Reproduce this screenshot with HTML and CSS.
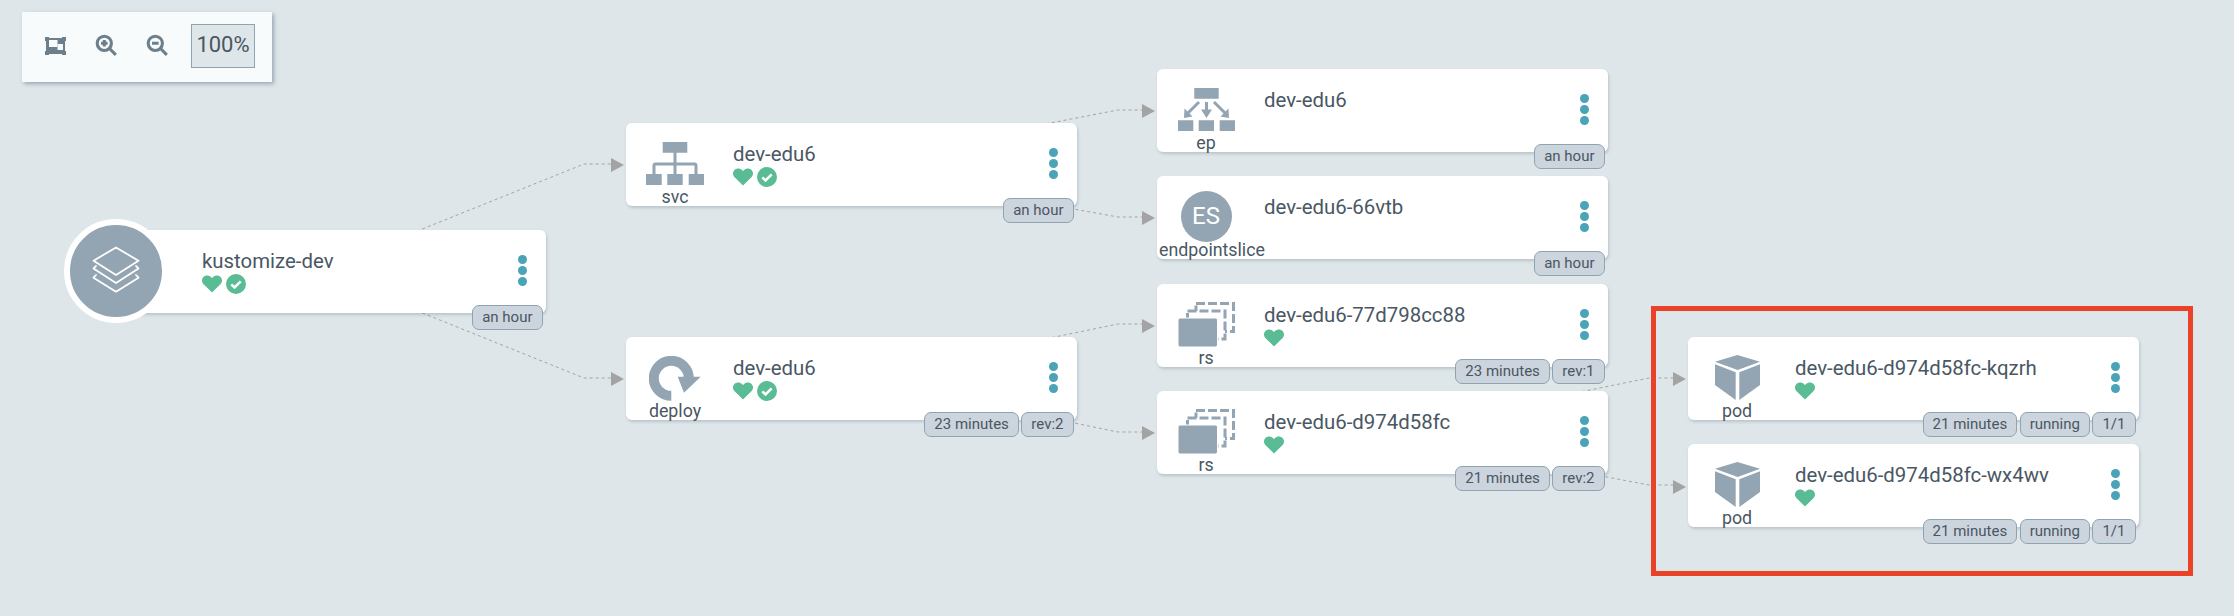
FILE: index.html
```html
<!DOCTYPE html>
<html lang="en">
<head>
    <meta charset="UTF-8">
    <meta name="viewport" content="width=device-width, initial-scale=1.0">
    <title>Application Resource Tree</title>
    <link rel="stylesheet" href="styles.css">
</head>
<body>
    <div class="toolbar">
        <button class="tool">
            <svg width="21" height="18" viewBox="0 0 21 18">
                <path class="tool-fill" d="M0 0h4v1h13V0h4v4h-1v10h1v4h-4v-1H4v1H0v-4h1V4H0z"/>
                <rect class="tool-hole" x="4" y="3" width="8.500" height="7"/>
                <rect class="tool-hole" x="12.500" y="7" width="5.500" height="6"/>
            </svg>
        </button>
        <button class="tool">
            <svg width="23" height="23" viewBox="0 0 21 21">
                <circle class="tool-line" cx="8.500" cy="8.500" r="6.500"/>
                <path class="tool-line" d="M13.500 13.500l5.500 5.500M8.500 5.500v6M5.500 8.500h6"/>
            </svg>
        </button>
        <button class="tool">
            <svg width="23" height="23" viewBox="0 0 21 21">
                <circle class="tool-line" cx="8.500" cy="8.500" r="6.500"/>
                <path class="tool-line" d="M13.500 13.500l5.500 5.500M5.500 8.500h6"/>
            </svg>
        </button>
        <div class="zoom-level">100%</div>
    </div>

    <svg class="edges" width="2234" height="616">
        <polyline points="400,238 584,164 611,164"/>
        <polyline points="400,304 584,378 611,378"/>
        <polyline points="1040,125 1118,110 1142,110"/>
        <polyline points="1040,203 1118,217 1142,217"/>
        <polyline points="1040,340 1118,324 1142,324"/>
        <polyline points="1040,416 1118,432 1142,432"/>
        <polyline points="1570,394 1649,378 1673,378"/>
        <polyline points="1570,470 1649,485 1673,485"/>
        <polygon points="611,158 624,165 611,172"/>
        <polygon points="611,372 624,379 611,386"/>
        <polygon points="1142,104 1155,111 1142,118"/>
        <polygon points="1142,211 1155,218 1142,225"/>
        <polygon points="1142,319 1155,326 1142,333"/>
        <polygon points="1142,426 1155,433 1142,440"/>
        <polygon points="1673,372 1686,379 1673,386"/>
        <polygon points="1673,480 1686,487 1673,494"/>
    </svg>

    <!-- root -->
    <div class="node node-root">
        <div class="root-icon">
            <svg width="92" height="92" viewBox="0 0 92 92">
                <path class="layers" d="M23.500 35.700L46 22.500l22.500 13.200L46 50zM26 41l-2.500 2.400L46 58l22.500-14.600L66 41M26 50l-2.500 2.700L46 66.700l22.500-14L66 50"/>
            </svg>
        </div>
        <div class="kind"></div>
        <div class="info">
            <div class="name">kustomize-dev</div>
            <div class="status">
                <svg class="heart" viewBox="0 0 21 18"><use href="#heart"/></svg>
                <svg class="check" viewBox="0 0 20 20"><use href="#check"/></svg>
            </div>
        </div>
        <div class="dots"><i></i><i></i><i></i></div>
        <div class="badges"><span>an hour</span></div>
    </div>

    <!-- svc -->
    <div class="node node-svc">
        <div class="kind">
            <div class="kind-icon">
                <svg width="58" height="43" viewBox="0 0 58 43">
                    <path class="icon-fill" d="M16.700 0h24.600v10.700H16.700zM0 32h15.700v11H0zM21.300 32h15.400v11H21.300zM42.700 32H58v11H42.700z"/>
                    <path class="icon-line" d="M29 10v22M8 32v-8.500q0-1.500 1.500-1.500h39q1.500 0 1.500 1.500V32"/>
                </svg>
            </div>
            <div class="kind-label">svc</div>
        </div>
        <div class="info">
            <div class="name">dev-edu6</div>
            <div class="status">
                <svg class="heart" viewBox="0 0 21 18"><use href="#heart"/></svg>
                <svg class="check" viewBox="0 0 20 20"><use href="#check"/></svg>
            </div>
        </div>
        <div class="dots"><i></i><i></i><i></i></div>
        <div class="badges"><span>an hour</span></div>
    </div>

    <!-- deploy -->
    <div class="node node-deploy">
        <div class="kind">
            <div class="kind-icon">
                <svg class="deploy-icon" width="52" height="45" viewBox="0 0 52 45">
                    <path class="deploy-ring" d="M22.300 39.800A17.500 17.500 0 1 1 39.800 22.300"/>
                    <polygon class="icon-fill" points="28.700,20.700 51.700,20.700 35,36.700"/>
                </svg>
            </div>
            <div class="kind-label">deploy</div>
        </div>
        <div class="info">
            <div class="name">dev-edu6</div>
            <div class="status">
                <svg class="heart" viewBox="0 0 21 18"><use href="#heart"/></svg>
                <svg class="check" viewBox="0 0 20 20"><use href="#check"/></svg>
            </div>
        </div>
        <div class="dots"><i></i><i></i><i></i></div>
        <div class="badges"><span>23 minutes</span><span>rev:2</span></div>
    </div>

    <!-- ep -->
    <div class="node node-ep">
        <div class="kind">
            <div class="kind-icon">
                <svg width="57" height="43" viewBox="0 0 57 43">
                    <path class="icon-fill" d="M16.300 0h24.400v10.700H16.300zM0 32.300h15.300V43H0zM20.700 32.300H36V43H20.700zM41.700 32.300H57V43H41.700z"/>
                    <path class="icon-line" d="M28.500 14v9M21 14L10 25M36 14l11 11"/>
                    <path class="icon-fill" d="M23 21.500h11L28.500 30zM6.500 20.500l8 8-8.500 1.500zM50.500 20.500l-8 8 8.500 1.500z"/>
                </svg>
            </div>
            <div class="kind-label">ep</div>
        </div>
        <div class="info">
            <div class="name">dev-edu6</div>
            <div class="status"></div>
        </div>
        <div class="dots"><i></i><i></i><i></i></div>
        <div class="badges"><span>an hour</span></div>
    </div>

    <!-- endpointslice -->
    <div class="node node-es">
        <div class="kind">
            <div class="kind-icon">
                <div class="es-icon">ES</div>
            </div>
            <div class="kind-label">endpointslice</div>
        </div>
        <div class="info">
            <div class="name">dev-edu6-66vtb</div>
            <div class="status"></div>
        </div>
        <div class="dots"><i></i><i></i><i></i></div>
        <div class="badges"><span>an hour</span></div>
    </div>

    <!-- rs -->
    <div class="node node-rs1">
        <div class="kind">
            <div class="kind-icon">
                <svg width="57" height="45" viewBox="0 0 57 45"><use href="#rs"/></svg>
            </div>
            <div class="kind-label">rs</div>
        </div>
        <div class="info">
            <div class="name">dev-edu6-77d798cc88</div>
            <div class="status">
                <svg class="heart" viewBox="0 0 21 18"><use href="#heart"/></svg>
            </div>
        </div>
        <div class="dots"><i></i><i></i><i></i></div>
        <div class="badges"><span>23 minutes</span><span>rev:1</span></div>
    </div>

    <div class="node node-rs2">
        <div class="kind">
            <div class="kind-icon">
                <svg width="57" height="45" viewBox="0 0 57 45"><use href="#rs"/></svg>
            </div>
            <div class="kind-label">rs</div>
        </div>
        <div class="info">
            <div class="name">dev-edu6-d974d58fc</div>
            <div class="status">
                <svg class="heart" viewBox="0 0 21 18"><use href="#heart"/></svg>
            </div>
        </div>
        <div class="dots"><i></i><i></i><i></i></div>
        <div class="badges"><span>21 minutes</span><span>rev:2</span></div>
    </div>

    <!-- pods -->
    <div class="node node-pod1">
        <div class="kind">
            <div class="kind-icon">
                <svg width="45" height="45" viewBox="0 0 45 45"><use href="#pod"/></svg>
            </div>
            <div class="kind-label">pod</div>
        </div>
        <div class="info">
            <div class="name">dev-edu6-d974d58fc-kqzrh</div>
            <div class="status">
                <svg class="heart" viewBox="0 0 21 18"><use href="#heart"/></svg>
            </div>
        </div>
        <div class="dots"><i></i><i></i><i></i></div>
        <div class="badges"><span>21 minutes</span><span>running</span><span>1/1</span></div>
    </div>

    <div class="node node-pod2">
        <div class="kind">
            <div class="kind-icon">
                <svg width="45" height="45" viewBox="0 0 45 45"><use href="#pod"/></svg>
            </div>
            <div class="kind-label">pod</div>
        </div>
        <div class="info">
            <div class="name">dev-edu6-d974d58fc-wx4wv</div>
            <div class="status">
                <svg class="heart" viewBox="0 0 21 18"><use href="#heart"/></svg>
            </div>
        </div>
        <div class="dots"><i></i><i></i><i></i></div>
        <div class="badges"><span>21 minutes</span><span>running</span><span>1/1</span></div>
    </div>

    <div class="highlight"></div>

    <!-- shared icons -->
    <svg class="defs" width="0" height="0">
        <defs>
            <g id="heart">
                <path fill="#59bc94" d="M10.500 18L1.700 9.300C-.6 7-.5 3.500 1.500 1.600 3.700-.5 7.200-.5 9.300 1.600l1.200 1.200 1.200-1.200c2.100-2.100 5.600-2.100 7.800 0 2 1.900 2.100 5.400-.2 7.700z"/>
            </g>
            <g id="check">
                <circle cx="10" cy="10" r="10" fill="#59bc94"/>
                <path d="M5.300 10.300l3.200 3.200 6.200-6.200" fill="none" stroke="#fff" stroke-width="2.600"/>
            </g>
            <g id="rs">
                <g fill="#fff" stroke="#93a4b2" stroke-width="3" stroke-dasharray="9 3">
                    <rect x="18" y="1.500" width="37.500" height="28"/>
                    <rect x="9.500" y="9" width="37.500" height="28"/>
                </g>
                <rect x="0" y="16" width="39.500" height="29" rx="2" fill="#93a4b2" stroke="#fff"/>
            </g>
            <g id="pod" fill="#93a4b2">
                <polygon points="0,6.700 22.300,0 45,6.700 22.700,15"/>
                <polygon points="0,9.300 20.700,17.300 20.700,45 0,30"/>
                <polygon points="24.300,17.300 45,9.300 45,30 24.300,45"/>
            </g>
        </defs>
    </svg>
</body>
</html>
```

FILE: styles.css
```css
body {
    font-family: Roboto, "Liberation Sans", sans-serif;
    margin: 0;
    padding: 0;
    width: 2234px;
    height: 616px;
    overflow: hidden;
    position: relative;
    background-color: #dee6e9;
    color: #495763;
}

.toolbar {
    position: absolute;
    left: 22px;
    top: 12px;
    width: 250px;
    height: 70px;
    box-sizing: border-box;
    padding: 12px 0 15px 8px;
    display: flex;
    align-items: center;
    background-color: #f8fbfb;
    box-shadow: 2px 2px 4px rgba(110, 130, 150, 0.6);
}

.tool {
    width: 51px;
    height: 43px;
    padding: 0;
    border: none;
    background: none;
    display: flex;
    align-items: center;
    justify-content: center;
}

.tool-fill {
    fill: #6d7f8b;
}

.tool-hole {
    fill: #f8fbfb;
}

.tool-line {
    fill: none;
    stroke: #6d7f8b;
    stroke-width: 2.800;
}

.zoom-level {
    margin-left: 8px;
    width: 64px;
    height: 44px;
    box-sizing: border-box;
    border: 1px solid #8fa4b1;
    background-color: #dee6e9;
    font-size: 22px;
    line-height: 40px;
    text-align: center;
}

.edges {
    position: absolute;
    left: 0;
    top: 0;
}

.edges polyline {
    fill: none;
    stroke: #a3a3a3;
    stroke-width: 1;
    stroke-dasharray: 3 3;
}

.edges polygon {
    fill: #a3a3a3;
}

.defs {
    position: absolute;
}

.node {
    position: absolute;
    width: 451px;
    height: 83px;
    display: flex;
    background-color: white;
    border-radius: 6px;
    box-shadow: 1px 2px 3px rgba(80, 100, 120, 0.25);
}

.node-root { left: 95px; top: 230px; }
.node-svc { left: 626px; top: 123px; }
.node-deploy { left: 626px; top: 337px; }
.node-ep { left: 1157px; top: 69px; }
.node-es { left: 1157px; top: 176px; }
.node-rs1 { left: 1157px; top: 284px; }
.node-rs2 { left: 1157px; top: 391px; }
.node-pod1 { left: 1688px; top: 337px; }
.node-pod2 { left: 1688px; top: 444px; }

.kind {
    width: 94px;
    margin: 0 11px 0 2px;
    padding-top: 15px;
    box-sizing: border-box;
    flex-shrink: 0;
}

.kind-icon {
    height: 50px;
    display: flex;
    align-items: center;
    justify-content: center;
}

.kind-icon svg {
    display: block;
}

.kind-label {
    height: 18px;
    line-height: 18px;
    font-size: 17.800px;
    text-align: center;
    white-space: nowrap;
}

.icon-fill {
    fill: #93a4b2;
}

.icon-line {
    fill: none;
    stroke: #93a4b2;
    stroke-width: 3;
}

.deploy-icon {
    margin-top: 3px;
}

.deploy-ring {
    fill: none;
    stroke: #93a4b2;
    stroke-width: 10;
}

.es-icon {
    width: 51px;
    height: 51px;
    flex-shrink: 0;
    border-radius: 50%;
    background-color: #93a4b2;
    color: white;
    font-size: 24px;
    line-height: 51px;
    text-align: center;
}

.root-icon {
    position: absolute;
    left: -31px;
    top: -11px;
    width: 92px;
    height: 92px;
    border: 6px solid white;
    border-radius: 50%;
    background-color: #93a4b2;
}

.layers {
    fill: none;
    stroke: white;
    stroke-width: 1.800;
    stroke-linejoin: round;
    stroke-linecap: round;
}

.info {
    padding-top: 19px;
    flex-grow: 1;
}

.name {
    font-size: 20.400px;
    line-height: 24px;
    white-space: nowrap;
}

.status {
    margin-top: 1px;
    height: 20px;
    display: flex;
    align-items: center;
    gap: 4px;
}

.heart {
    width: 20px;
    height: 18px;
}

.check {
    width: 20px;
    height: 20px;
}

.dots {
    position: absolute;
    right: 19.500px;
    top: 25px;
    display: flex;
    flex-direction: column;
    gap: 2px;
}

.dots i {
    display: block;
    width: 9px;
    height: 9px;
    border-radius: 50%;
    background-color: #4aa3b6;
}

.badges {
    position: absolute;
    right: 3.500px;
    bottom: -16.500px;
    display: flex;
    gap: 2.500px;
}

.badges span {
    height: 24.500px;
    box-sizing: border-box;
    padding: 0 9px;
    border: 1px solid #8fa4b1;
    border-radius: 7px;
    background-color: #ccd4dd;
    font-size: 15px;
    line-height: 22.500px;
    white-space: nowrap;
}

.highlight {
    position: absolute;
    left: 1651px;
    top: 306px;
    width: 541.500px;
    height: 270px;
    box-sizing: border-box;
    border: 5px solid #ea4227;
}
```
